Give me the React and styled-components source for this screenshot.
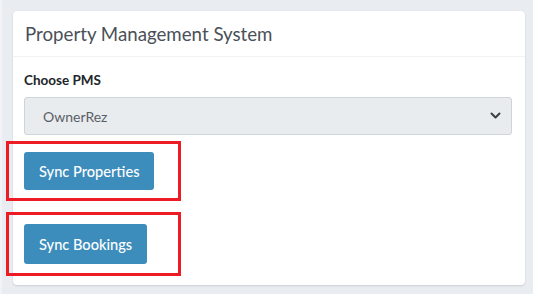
import React from 'react'
import styled, { createGlobalStyle } from 'styled-components'

const GlobalStyle = createGlobalStyle`
    html, body {
        margin: 0;
        padding: 0;
        background: #e9ecf1;
        font-family: Lato, "Open Sans", sans-serif;
    }
    body {
        border-left: 2px solid #f1f3f6;
    }
`

const Page = styled.div`
    width: 533px;
    height: 294px;
    box-sizing: border-box;
    padding: 11px 10px 0 11px;
`

const Card = styled.div`
    background: #fff;
    border-radius: 4px;
    box-shadow: 0 0 1px rgba(0,0,0,.1), 0 1px 2px rgba(0,0,0,.12);
    height: 274px;
    box-sizing: border-box;
`

const CardHeader = styled.div`
    height: 46px;
    box-sizing: border-box;
    padding: 0 12px;
    display: flex;
    align-items: center;
    border-bottom: 1px solid rgba(0,0,0,.05);
`

const Title = styled.h3`
    margin: 0;
    font-size: 18.7px;
    font-weight: 400;
    color: #4a5058;
`

const CardBody = styled.div`
    padding: 15px 11px 0 11px;
`

const Label = styled.label`
    display: block;
    font-size: 13.5px;
    font-weight: 700;
    color: #212529;
    margin-bottom: 9px;
`

const SelectBox = styled.div`
    height: 38px;
    width: 488px;
    box-sizing: border-box;
    border: 1px solid #ced4da;
    border-radius: 3px;
    background: #e9ecef;
    display: flex;
    align-items: center;
    justify-content: space-between;
    padding: 0 10px 0 18px;
    font-size: 14px;
    color: #5a5f66;
`

const Highlight = styled.div`
    margin-left: -18px;
    width: 175px;
    box-sizing: border-box;
    border: 3px solid #ed1c24;
    padding: ${p => p.$pad}px 0 ${p => p.$pad}px 15px;
    margin-top: ${p => p.$top}px;
`

const Button = styled.button`
    display: block;
    height: ${p => p.$h || 38}px;
    padding: 0 15px;
    border: none;
    border-radius: 3px;
    background: #3c8dbc;
    color: #fff;
    font-family: inherit;
    font-size: 14.6px;
    font-weight: 500;
`

function Chevron() {
    return (
        <svg width="11" height="8" viewBox="0 0 11 8">
            <path d="M1.5 1.5 L5.5 5.5 L9.5 1.5" fill="none" stroke="#3a3f44" strokeWidth="2" strokeLinecap="round" strokeLinejoin="round" />
        </svg>
    )
}

export default function App() {
    return (
        <Page>
            <GlobalStyle />
            <Card>
                <CardHeader>
                    <Title>Property Management System</Title>
                </CardHeader>
                <CardBody>
                    <Label>Choose PMS</Label>
                    <SelectBox>
                        <span>OwnerRez</span>
                        <Chevron />
                    </SelectBox>
                    <Highlight $top={6} $pad={8}>
                        <Button>Sync Properties</Button>
                    </Highlight>
                    <Highlight $top={11} $pad={9}>
                        <Button $h={40}>Sync Bookings</Button>
                    </Highlight>
                </CardBody>
            </Card>
        </Page>
    )
}
